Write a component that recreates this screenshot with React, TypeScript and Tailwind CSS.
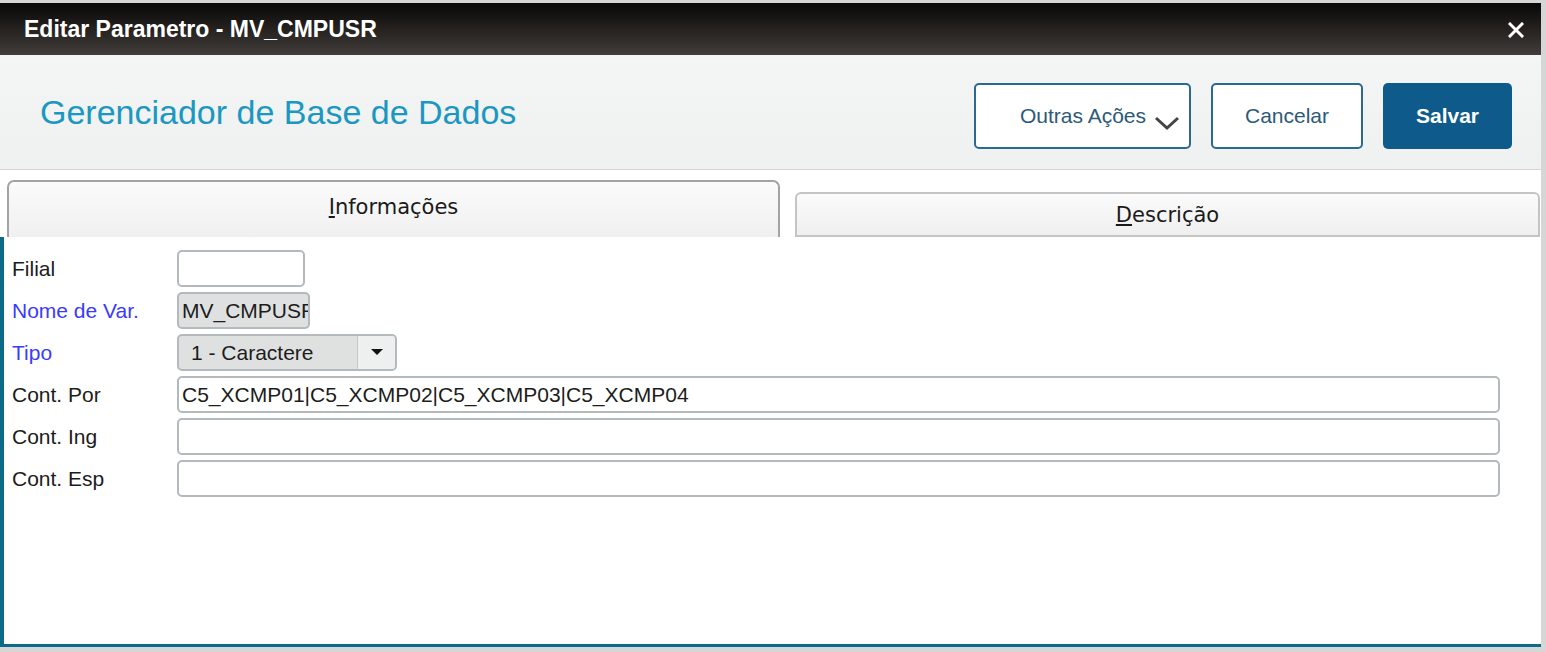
import React from 'react';

const arial = { fontFamily: '"Liberation Sans", Arial, sans-serif' };
const tabFont = { fontFamily: '"DejaVu Sans", Tahoma, sans-serif' };

interface FieldRowProps {
    label: string;
    blue?: boolean;
    children: React.ReactNode;
}

const FieldRow: React.FC<FieldRowProps> = ({ label, blue, children }) => (
    <div className="flex items-center h-[37px]">
        <span className={`w-[165px] text-[21px] leading-none ${blue ? 'text-[#3a3aff]' : 'text-[#1c1c1c]'}`}>{label}</span>
        {children}
    </div>
);

const inputBox = 'h-[37px] border-2 border-[#b3babd] rounded-[5px] flex items-center text-[21px] text-[#1c1c1c] overflow-hidden whitespace-nowrap';

const App: React.FC = () => {
    return (
        <div className="w-[1546px] h-[652px] bg-[#d6d6d6] pt-[3px] overflow-hidden" style={arial}>
            <div className="w-[1541px] h-[644px] flex flex-col bg-white">
                {/* title bar */}
                <div className="h-[52px] shrink-0 flex items-center justify-between pl-[24px] pr-[17px] bg-gradient-to-b from-[#0a0908] to-[#423d3a]">
                    <span className="text-white font-bold text-[23px] leading-none">Editar Parametro - MV_CMPUSR</span>
                    <svg width="16" height="16" viewBox="0 0 16 16" className="mt-[2px]">
                        <path d="M2 2 L14 14 M14 2 L2 14" stroke="white" strokeWidth="3" strokeLinecap="square" />
                    </svg>
                </div>

                {/* header */}
                <div className="h-[115px] shrink-0 flex items-center justify-between pl-[40px] pr-[29px] bg-gradient-to-b from-[#f4f5f5] to-[#eff0f0] border-b border-[#d4d6d6]">
                    <h1 className="text-[34px] leading-none text-[#1b98c2]">Gerenciador de Base de Dados</h1>
                    <div className="flex items-center gap-[20px] mt-[7px]">
                        <button className="w-[217px] h-[66px] rounded-[5px] border-2 border-[#2b6892] bg-white flex items-center justify-end pr-[9px] gap-[8px] text-[21px] text-[#2c5a78]">
                            <span>Outras Ações</span>
                            <svg width="26" height="16" viewBox="0 0 26 16" className="mt-[14px]">
                                <path d="M2 3 L13 13 L24 3" fill="none" stroke="#444" strokeWidth="3" />
                            </svg>
                        </button>
                        <button className="w-[152px] h-[66px] rounded-[5px] border-2 border-[#2b6892] bg-white text-[21px] text-[#2c5a78]">
                            Cancelar
                        </button>
                        <button className="w-[129px] h-[66px] rounded-[5px] bg-[#0d5a8b] text-[21px] font-bold text-white">
                            Salvar
                        </button>
                    </div>
                </div>

                {/* tabs */}
                <div className="h-[67px] shrink-0 flex items-end pl-[7px] pr-px gap-[15px] bg-white" style={tabFont}>
                    <div className="w-[773px] h-[57px] rounded-t-[7px] border-2 border-b-0 border-[#a3a3a3] bg-gradient-to-b from-[#fbfbfb] to-[#f0f0f0] flex items-center justify-center pb-[3px] text-[21px] text-[#1a1a1a]">
                        <span><span className="underline">I</span>nformações</span>
                    </div>
                    <div className="flex-1 h-[45px] rounded-t-[6px] border-2 border-[#c4c4c4] bg-gradient-to-b from-[#fbfbfb] to-[#efefef] flex items-center justify-center pt-[3px] text-[21px] text-[#1a1a1a]">
                        <span><span className="underline">D</span>escrição</span>
                    </div>
                </div>

                {/* content */}
                <div className="flex-1 border-l-4 border-b-[3px] border-[#0c6c88] pl-[8px] pt-[13px] flex flex-col gap-[5px]">
                    <FieldRow label="Filial">
                        <div className={`${inputBox} w-[128px] bg-white`} />
                    </FieldRow>
                    <FieldRow label="Nome de Var." blue>
                        <div className={`${inputBox} w-[133px] bg-[#dfe1e1] pl-[3px]`}>MV_CMPUSR</div>
                    </FieldRow>
                    <FieldRow label="Tipo" blue>
                        <div className={`${inputBox} w-[220px] bg-[#dfe1e1]`}>
                            <span className="flex-1 pl-[12px]">1 - Caractere</span>
                            <div className="w-[38px] h-full bg-[#eeefef] border-l border-[#c8caca] flex items-center justify-center">
                                <svg width="12" height="7" viewBox="0 0 12 7">
                                    <path d="M0 0 L12 0 L6 6 Z" fill="#111" />
                                </svg>
                            </div>
                        </div>
                    </FieldRow>
                    <FieldRow label="Cont. Por">
                        <div className={`${inputBox} w-[1323px] bg-white pl-[3px]`}>C5_XCMP01|C5_XCMP02|C5_XCMP03|C5_XCMP04</div>
                    </FieldRow>
                    <FieldRow label="Cont. Ing">
                        <div className={`${inputBox} w-[1323px] bg-white`} />
                    </FieldRow>
                    <FieldRow label="Cont. Esp">
                        <div className={`${inputBox} w-[1323px] bg-white`} />
                    </FieldRow>
                </div>
            </div>
        </div>
    );
};

export default App;
